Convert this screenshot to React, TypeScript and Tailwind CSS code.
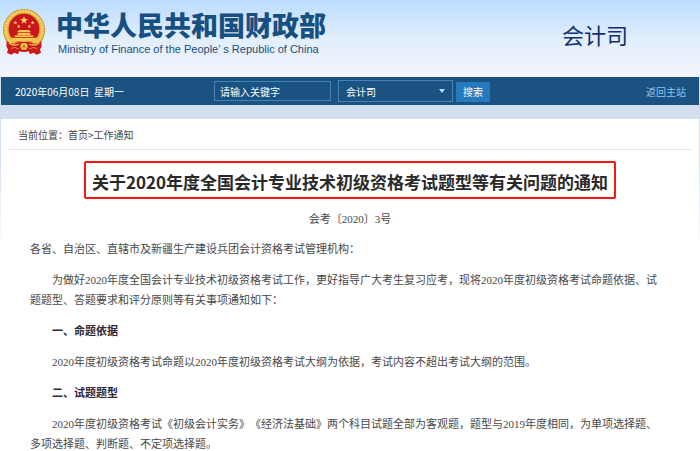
import React, { useState } from 'react';
import { clsx } from 'clsx';

interface Paragraph {
  text: string;
  heading?: boolean;
  flush?: boolean;
}

const PARAGRAPHS: Paragraph[] = [
  { text: '各省、自治区、直辖市及新疆生产建设兵团会计资格考试管理机构：', flush: true },
  {
    text: '为做好2020年度全国会计专业技术初级资格考试工作，更好指导广大考生复习应考，现将2020年度初级资格考试命题依据、试题题型、答题要求和评分原则等有关事项通知如下：',
  },
  { text: '一、命题依据', heading: true },
  { text: '2020年度初级资格考试命题以2020年度初级资格考试大纲为依据，考试内容不超出考试大纲的范围。' },
  { text: '二、试题题型', heading: true },
  {
    text: '2020年度初级资格考试《初级会计实务》《经济法基础》两个科目试题全部为客观题，题型与2019年度相同，为单项选择题、多项选择题、判断题、不定项选择题。',
  },
];

const STAR = 'M0 -5 L1.2 -1.6 L4.8 -1.6 L1.9 0.6 L3 4 L0 1.9 L-3 4 L-1.9 0.6 L-4.8 -1.6 L-1.2 -1.6 Z';

const Emblem: React.FC = () => (
  <svg viewBox="0 0 132 138" className="h-[46px] w-11 shrink-0" role="img" aria-label="国徽">
    {/* Wheat wreath */}
    <circle cx="66" cy="63" r="63" fill="#b98a2b" />
    <circle cx="66" cy="62" r="61" fill="#e8bb45" />
    <circle cx="66" cy="62" r="55" fill="none" stroke="#f7dc80" strokeWidth="5" strokeDasharray="5 4" />
    <circle cx="66" cy="60" r="48" fill="#d9a433" />
    <circle cx="66" cy="60" r="46" fill="#c9151b" />
    {/* Stars */}
    <g fill="#fbd75a">
      <path d={STAR} transform="translate(66 34) scale(2.5)" />
      <path d={STAR} transform="translate(40 41) scale(1.3)" />
      <path d={STAR} transform="translate(92 41) scale(1.3)" />
      <path d={STAR} transform="translate(50 52) scale(1.3)" />
      <path d={STAR} transform="translate(82 52) scale(1.3)" />
    </g>
    {/* Gate tower */}
    <g fill="#f3c64e">
      <path d="M46 69 L50 63 H82 L86 69 Z" />
      <path d="M47 71 H85 V78 H47 Z" />
      <path d="M38 79 H94 V84 H38 Z" />
      <path d="M27 86 H105 L102 98 H30 Z" />
    </g>
    {/* Ribbons */}
    <path d="M14 96 Q28 108 44 101 Q66 110 88 101 Q104 108 118 96 L119 112 L114 121 L117 132 L104 137 L94 131 L84 136 L80 127 Q66 131 52 127 L48 136 L38 131 L28 137 L15 132 L18 121 L13 112 Z" fill="#cb181b" />
    <path d="M20 101 Q33 112 50 106 M112 101 Q99 112 82 106" fill="none" stroke="#edbf4a" strokeWidth="4" />
    <path d="M27 118 Q39 112 50 120 M105 118 Q93 112 82 120" fill="none" stroke="#e08a30" strokeWidth="3" />
    <circle cx="66" cy="112" r="11" fill="#eabf4c" />
    <circle cx="66" cy="112" r="5" fill="#c68c22" />
  </svg>
);

const SiteHeader: React.FC = () => (
  <header className="flex h-[77px] items-start justify-between bg-linear-to-b from-[#bcdcff] via-[#e1eefc] to-[#f3f5fa] pl-[2px] pr-[72px] text-[#174f80]">
    <div className="flex items-start gap-[10px] pt-[9px]">
      <Emblem />
      <div className="whitespace-nowrap">
        <h1 className="text-[27px] font-black leading-[32px]">中华人民共和国财政部</h1>
        <p className="pl-[2px] font-['Liberation_Sans',sans-serif] text-[11px] leading-[16px]">
          Ministry of Finance of the People’ s Republic of China
        </p>
      </div>
    </div>
    <h2 className="pt-[18px] text-[22px] leading-[32px] text-[#12306f]">会计司</h2>
  </header>
);

const SearchBar: React.FC = () => {
  const [keyword, setKeyword] = useState('');

  return (
    <nav className="mx-px flex h-7 items-center bg-[#1a5381] pl-[14px] pr-[13px] text-[10px] text-white">
      <time dateTime="2020-06-08" className="w-[199px] shrink-0 whitespace-pre">
        {'2020年06月08日  星期一'}
      </time>
      <form className="flex items-center" onSubmit={(e) => e.preventDefault()}>
        <input
          type="text"
          aria-label="关键字"
          placeholder="请输入关键字"
          value={keyword}
          onChange={(e) => setKeyword(e.target.value)}
          className="h-5 w-[117px] border border-[#4583b4] bg-transparent px-[5px] outline-none placeholder:text-white"
        />
        <div className="relative ml-[7px]">
          <select
            aria-label="搜索范围"
            className="block h-[22px] w-[115px] appearance-none border border-[#4583b4] bg-[#1a5381] px-[7px] text-[10px] text-white outline-none"
          >
            <option>会计司</option>
          </select>
          <svg viewBox="0 0 6 4" className="pointer-events-none absolute right-2 top-[9px] h-1 w-1.5">
            <path d="M0 0 H6 L3 4 Z" fill="#b9dcf5" />
          </svg>
        </div>
        <button type="submit" className="ml-[3px] mt-px h-5 w-[34px] bg-[#2679bc]">
          搜索
        </button>
      </form>
      <a href="#" className="ml-auto text-[#8fc4ea]">
        返回主站
      </a>
    </nav>
  );
};

const App: React.FC = () => {
  return (
    <div className="min-h-screen bg-white bg-linear-to-b from-[#d3dff0] from-0% via-[#d3dff0] via-35% to-white to-55% font-['Noto_Sans_CJK_SC',sans-serif]">
      <SiteHeader />
      <SearchBar />
      <main className="mx-px mt-[14px] min-h-[332px] bg-white px-[7px]">
        <div className="flex h-[31px] items-center border-b border-[#e6e6e6] pl-[10px] text-[10px] text-[#444]">
          当前位置：<a href="#">首页</a>&gt;<a href="#">工作通知</a>
        </div>
        <article className="pt-[11px] font-['Liberation_Serif','Noto_Sans_CJK_SC',serif] text-[11px] leading-[20px] text-[#484848]">
          <h1 className="mx-auto w-fit rounded-[2px] border-2 border-[#fb1410] px-[6px] pt-1 font-['Noto_Sans_CJK_SC',sans-serif] text-[17px] font-bold leading-[30px] text-[#292929]">
            关于2020年度全国会计专业技术初级资格考试题型等有关问题的通知
          </h1>
          <p className="mt-[10px] text-center">会考〔2020〕3号</p>
          <div className="mt-[10px] flex flex-col gap-[11px] pl-[22px] pr-8 [text-spacing-trim:space-all]">
            {PARAGRAPHS.map((item) => (
              <p key={item.text} className={clsx(!item.flush && 'indent-[22px]', item.heading && 'font-bold text-[#302838]')}>
                {item.text}
              </p>
            ))}
          </div>
        </article>
      </main>
    </div>
  );
};

export default App;
